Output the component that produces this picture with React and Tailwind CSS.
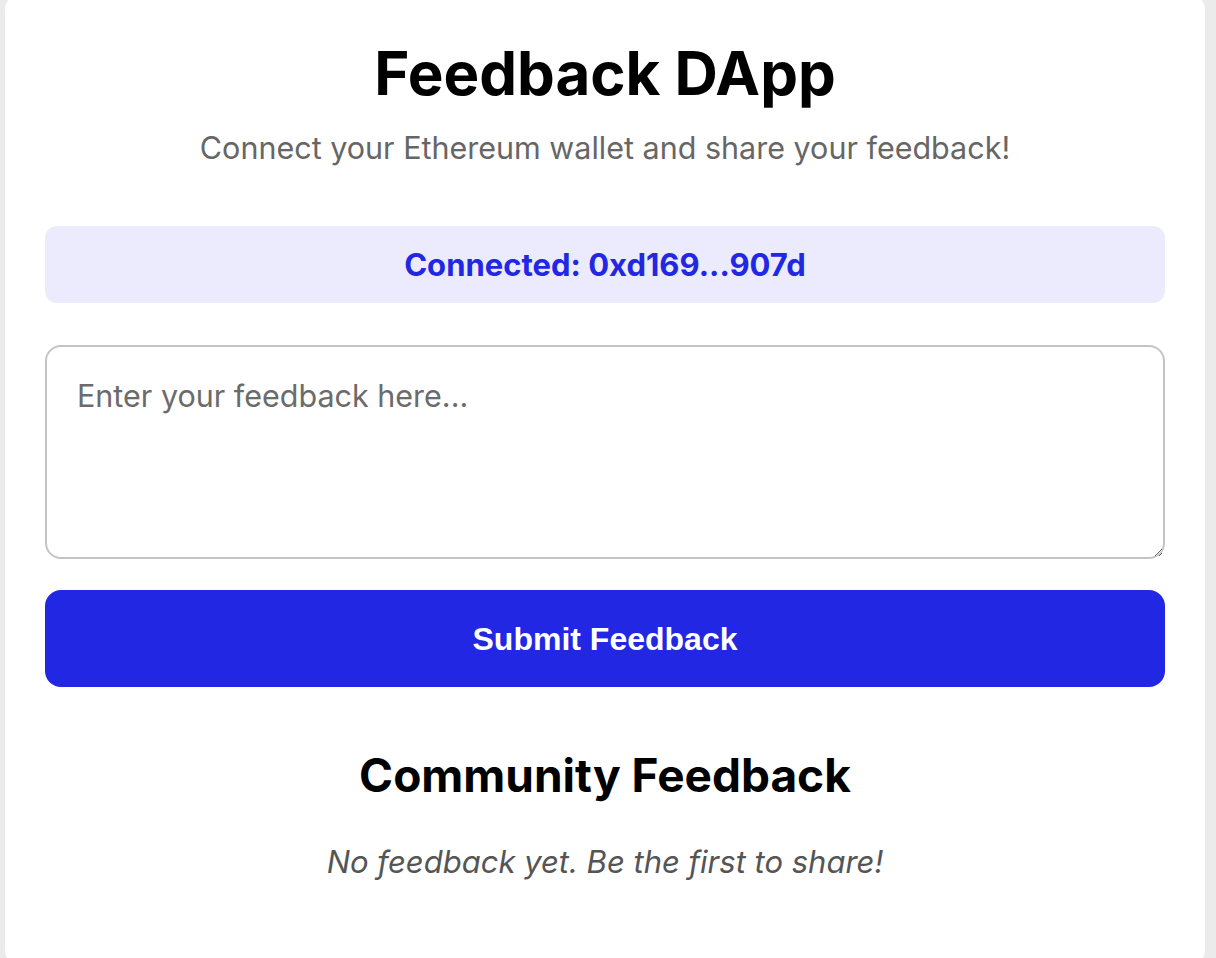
export default function App() {
  return (
    <div className="min-h-screen overflow-hidden bg-[#ebebeb] pl-[5px] pr-[11px] font-['Inter',sans-serif]">
      <div className="-mt-[6px] rounded-[16px] bg-white px-10 pt-10 pb-20">
        <h1 className="text-center text-[60px] font-bold leading-[78px] text-black">
          Feedback DApp
        </h1>
        <p className="mt-[12px] text-center text-[30.5px] leading-[48px] text-[#666666]">
          Connect your Ethereum wallet and share your feedback!
        </p>

        <div className="mt-[54px] rounded-[12px] bg-[#ebebfd] py-[19px] text-center text-[31px] font-bold leading-[39px] text-[#2127e3]">
          Connected: 0xd169...907d
        </div>

        <textarea
          placeholder="Enter your feedback here..."
          className="mt-[42px] block h-[214px] w-full rounded-[16px] border-2 border-[#c4c4c4] px-[30px] py-[31px] text-[30.5px] leading-[1.2] text-black placeholder:text-[#6b6b6b] focus:outline-none"
        />

        <button className="mt-[31px] flex h-[97px] w-full items-center justify-center rounded-[16px] bg-[#2127e3] font-['Liberation_Sans',Arial,sans-serif] text-[32px] font-bold text-white">
          Submit Feedback
        </button>

        <h2 className="mt-[60px] text-center text-[46px] font-bold leading-[56px] text-black">
          Community Feedback
        </h2>
        <p className="mt-[35px] text-center text-[31px] italic leading-[48px] text-[#555555]">
          No feedback yet. Be the first to share!
        </p>
      </div>
    </div>
  );
}
